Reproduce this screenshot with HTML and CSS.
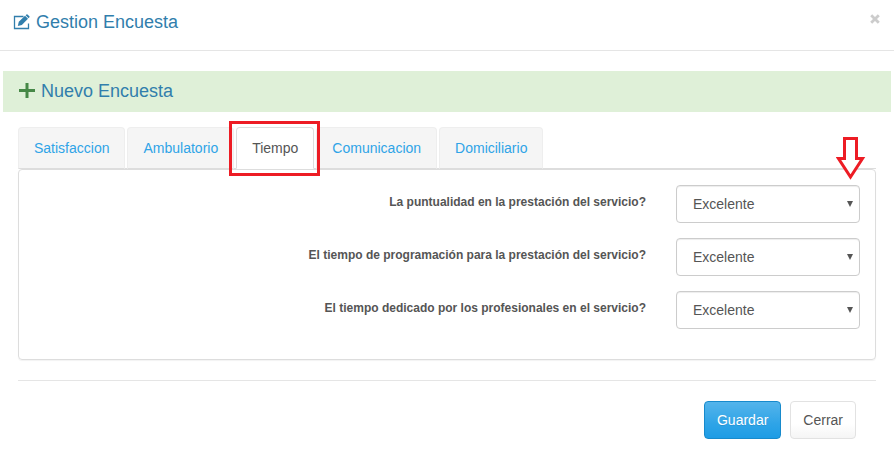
FILE: index.html
```
<!DOCTYPE html>
<html lang="es">
<head>
  <meta charset="UTF-8" />
  <meta name="viewport" content="width=device-width, initial-scale=1.0" />
  <title>Gestion Encuesta</title>
  <link rel="stylesheet" href="styles.css">
</head>
<body>
  <div class="modal-header">
    <h4 class="modal-title">
      <svg class="icon-edit" width="18" height="16" viewBox="0 0 18 16" aria-hidden="true">
        <path d="M10.500 2.500h-9v12h14V9.500" fill="none" stroke="currentColor" stroke-width="1.300"/>
        <path d="M4.800 12l1-4.200 6.200-6 3 3-6.200 6.200z" fill="currentColor"/>
        <path d="M12.600 1.200l.9-.8q.5-.4 1 0l1.900 1.900q.5.500 0 1l-.8.900z" fill="currentColor"/>
      </svg>
      Gestion Encuesta
    </h4>
    <button type="button" class="close" aria-label="Cerrar ventana">
      <svg width="10" height="10" viewBox="0 0 10 10" aria-hidden="true">
        <path d="M1.2 1.2l7.6 7.6M8.800 1.2L1.2 8.800" stroke="currentColor" stroke-width="2.800"/>
      </svg>
    </button>
  </div>

  <div class="modal-body">
    <div class="panel-heading">
      <svg class="icon-plus" width="16" height="16" viewBox="0 0 16 16" aria-hidden="true">
        <path d="M8 0v15M0 7.500h16" stroke="currentColor" stroke-width="3"/>
      </svg>
      <h4>Nuevo Encuesta</h4>
    </div>

    <form class="panel-body">
      <ul class="nav-tabs">
        <li><a href="#satisfaccion">Satisfaccion</a></li>
        <li><a href="#ambulatorio">Ambulatorio</a></li>
        <li class="active"><a href="#tiempo">Tiempo</a><span class="mark-box"></span></li>
        <li><a href="#comunicacion">Comunicacion</a></li>
        <li><a href="#domiciliario">Domiciliario</a></li>
      </ul>

      <div class="tab-content" id="tiempo">
        <div class="form-group">
          <label for="puntualidad">La puntualidad en la prestación del servicio?</label>
          <div class="col-select">
            <select id="puntualidad" class="form-control">
              <option>Excelente</option>
            </select>
            <svg class="caret" width="6" height="6" viewBox="0 0 6 6" aria-hidden="true"><path d="M0 0h6L3 6z" fill="currentColor"/></svg>
            <svg class="mark-arrow" width="30" height="44" viewBox="0 0 30 44" aria-hidden="true">
              <path d="M8.500 2.500h12v20h6L14.500 41 2.500 22.500h6z" fill="#fff" stroke="currentColor" stroke-width="3"/>
            </svg>
          </div>
        </div>
        <div class="form-group">
          <label for="programacion">El tiempo de programación para la prestación del servicio?</label>
          <div class="col-select">
            <select id="programacion" class="form-control">
              <option>Excelente</option>
            </select>
            <svg class="caret" width="6" height="6" viewBox="0 0 6 6" aria-hidden="true"><path d="M0 0h6L3 6z" fill="currentColor"/></svg>
          </div>
        </div>
        <div class="form-group">
          <label for="dedicado">El tiempo dedicado por los profesionales en el servicio?</label>
          <div class="col-select">
            <select id="dedicado" class="form-control">
              <option>Excelente</option>
            </select>
            <svg class="caret" width="6" height="6" viewBox="0 0 6 6" aria-hidden="true"><path d="M0 0h6L3 6z" fill="currentColor"/></svg>
          </div>
        </div>
      </div>

      <div class="form-footer">
        <button type="submit" class="btn btn-primary">Guardar</button>
        <button type="button" class="btn btn-default">Cerrar</button>
      </div>
    </form>
  </div>
</body>
</html>
```
FILE: styles.css
```
* {
  box-sizing: border-box;
}
body {
  margin: 0;
  font-family: "Liberation Sans", Arial, sans-serif;
  font-size: 14px;
  line-height: 20px;
  color: #555;
  background: #fff;
}
h4 {
  margin: 0;
  font-size: 18px;
  font-weight: normal;
  line-height: 20px;
  color: #317eac;
}

/* header */
.modal-header {
  display: flex;
  justify-content: space-between;
  align-items: flex-start;
  padding: 12px 14px 18px 13px;
  border-bottom: 1px solid #e5e5e5;
}
.modal-title {
  display: flex;
  align-items: center;
  gap: 5px;
}
.close {
  display: flex;
  margin-top: 2px;
  padding: 0;
  border: 0;
  background: none;
  color: #ccc;
  cursor: pointer;
}

.modal-body {
  padding: 20px 3px 0;
}
.panel-heading {
  display: flex;
  align-items: center;
  gap: 6px;
  padding: 10px 16px 11px;
  background: #dff0d8;
}
.icon-plus {
  color: #468847;
}
.panel-body {
  padding: 15px;
}

/* tabs */
.nav-tabs {
  display: flex;
  gap: 2px;
  margin: 0;
  padding: 0;
  list-style: none;
  border-bottom: 1px solid #ddd;
}
.nav-tabs li {
  position: relative;
  margin-bottom: -1px;
}
.nav-tabs a {
  display: block;
  padding: 10px 15px;
  border: 1px solid #eee;
  border-bottom-color: #ddd;
  border-radius: 4px 4px 0 0;
  background: #f5f5f5;
  color: #2fa4e7;
  text-decoration: none;
}
.nav-tabs .active a {
  border-color: #ddd;
  border-bottom-color: #fff;
  background: #fff;
  color: #555;
}
.tab-content {
  padding: 15px 0 30px;
  border: 1px solid #ddd;
  border-radius: 4px;
  box-shadow: 0 1px 1px rgba(0, 0, 0, 0.05);
}

/* form */
.form-group {
  display: grid;
  grid-template-columns: 3fr 1fr;
  height: 38px;
  margin-bottom: 15px;
}
.form-group:last-child {
  margin-bottom: 0;
}
.form-group label {
  padding: 7px 15px;
  font-size: 12px;
  font-weight: bold;
  text-align: right;
}
.col-select {
  position: relative;
  padding: 0 15px;
}
.form-control {
  width: 100%;
  height: 38px;
  padding: 8px 16px;
  border: 1px solid #ccc;
  border-radius: 4px;
  background: #fff;
  box-shadow: inset 0 1px 1px rgba(0, 0, 0, 0.075);
  font: inherit;
  color: #555;
  appearance: none;
}
.caret {
  position: absolute;
  top: 16px;
  right: 22px;
  pointer-events: none;
}

/* red marks */
.mark-box {
  position: absolute;
  inset: -6px -6px -7px -7px;
  z-index: 1;
  border: 3px solid #ed1c24;
  pointer-events: none;
}
.mark-arrow {
  position: absolute;
  top: -49px;
  right: 9px;
  color: #ed1c24;
  pointer-events: none;
}

/* buttons */
.form-footer {
  display: flex;
  justify-content: flex-end;
  gap: 9px;
  margin-top: 20px;
  padding: 20px;
  border-top: 1px solid #e5e5e5;
}
.btn {
  height: 38px;
  padding: 8px 12px;
  border: 1px solid;
  border-radius: 4px;
  font: inherit;
  cursor: pointer;
}
.btn-primary {
  border-color: #178acc;
  background: linear-gradient(#54b4eb, #2fa4e7 60%, #1d9ce5);
  color: #fff;
  text-shadow: 0 1px 0 rgba(0, 0, 0, 0.1);
}
.btn-default {
  border-color: #e2e2e2;
  background: linear-gradient(#fff, #fff 60%, #f5f5f5);
  color: #555;
}
```
